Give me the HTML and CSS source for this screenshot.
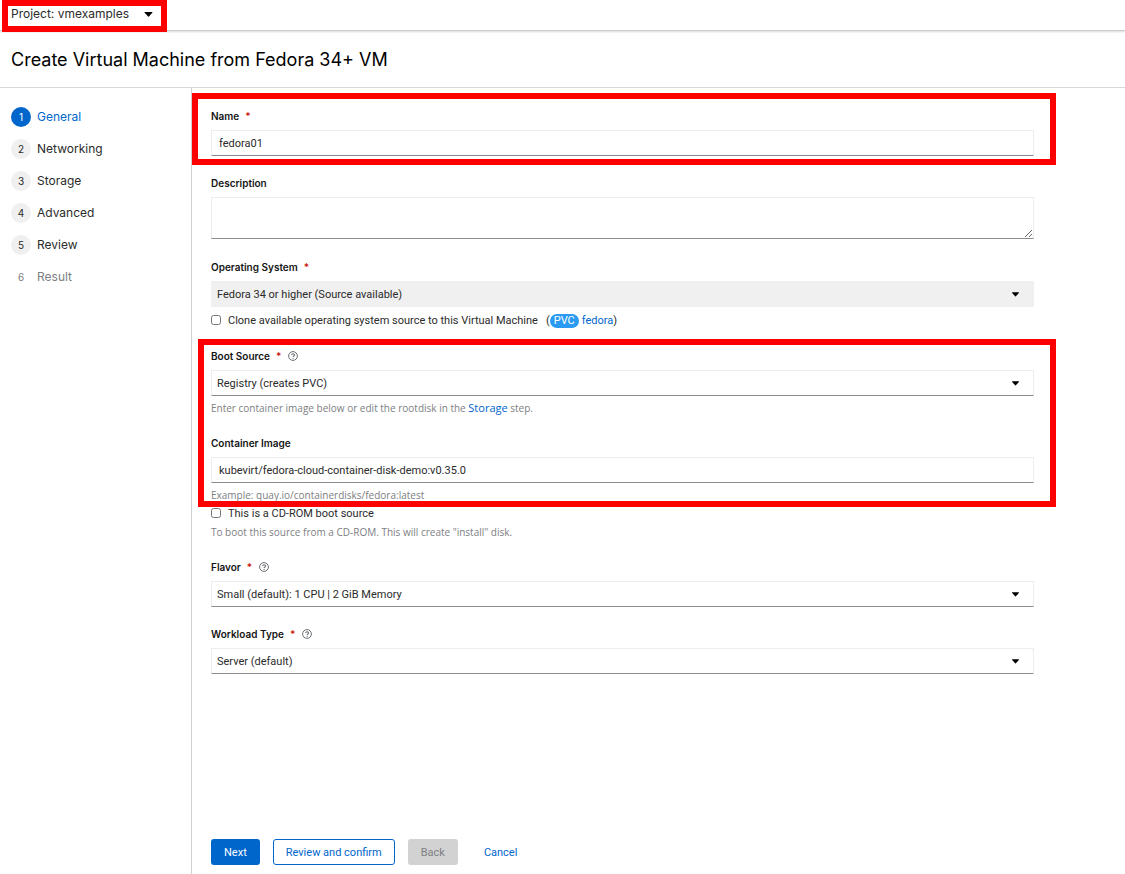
FILE: index.html
```
<!DOCTYPE html>
<html lang="en">
<head>
<meta charset="utf-8">
<title>Create Virtual Machine</title>
<link rel="stylesheet" href="styles.css">
</head>
<body>
<svg class="sprite" aria-hidden="true">
  <symbol id="caret" viewBox="0 0 8 5"><path d="M.3 0h7.4q.5.3.1.8L4.4 4.6q-.4.4-.8 0L.2.8Q-.2.3.3 0z" fill="currentColor"/></symbol>
  <symbol id="help" viewBox="0 0 10 10"><circle cx="5" cy="5" r="4.4" fill="none" stroke="currentColor"/><path d="M3.6 3.9c.1-1.6 3-1.5 2.9.1C6.500 5 5.100 4.900 5.100 6" fill="none" stroke="currentColor" stroke-width="1.100"/><circle cx="5.100" cy="7.300" r=".65" fill="currentColor"/></symbol>
</svg>

<div class="project-bar">
  <button class="project" type="button">Project: vmexamples
    <svg class="project-caret" aria-hidden="true"><use href="#caret"/></svg>
  </button>
</div>

<header class="page-header"><h1>Create Virtual Machine from Fedora 34+ VM</h1></header>

<div class="wizard">
  <nav class="steps" aria-label="Wizard steps">
    <ol>
      <li><a class="step current" href="#general" aria-current="step"><span class="num">1</span>General</a></li>
      <li><a class="step" href="#networking"><span class="num">2</span>Networking</a></li>
      <li><a class="step" href="#storage"><span class="num">3</span>Storage</a></li>
      <li><a class="step" href="#advanced"><span class="num">4</span>Advanced</a></li>
      <li><a class="step" href="#review"><span class="num">5</span>Review</a></li>
      <li><a class="step disabled" aria-disabled="true"><span class="num">6</span>Result</a></li>
    </ol>
  </nav>

  <main class="content">
    <form class="form">
      <div class="field highlight highlight-name">
        <div class="label-row"><label for="name">Name</label><span class="required">*</span></div>
        <input class="control" id="name" type="text" value="fedora01">
      </div>

      <div class="field field-multiline">
        <div class="label-row"><label for="description">Description</label></div>
        <textarea class="control" id="description"></textarea>
      </div>

      <div class="field">
        <div class="label-row"><label for="os">Operating System</label><span class="required">*</span></div>
        <div class="select"><select class="control" id="os" disabled><option>Fedora 34 or higher (Source available)</option></select><svg class="select-caret" aria-hidden="true"><use href="#caret"/></svg></div>
        <div class="check clone">
          <input type="checkbox" id="clone"><label for="clone">Clone available operating system source to this Virtual Machine</label>
          <span class="source">(<span class="pill">PVC</span><a href="#fedora">fedora</a>)</span>
        </div>
      </div>

      <div class="group highlight highlight-boot">
        <div class="field">
          <div class="label-row"><label for="boot">Boot Source</label><span class="required">*</span><button class="help" type="button" aria-label="Boot source help"><svg><use href="#help"/></svg></button></div>
          <div class="select"><select class="control" id="boot"><option>Registry (creates PVC)</option></select><svg class="select-caret" aria-hidden="true"><use href="#caret"/></svg></div>
          <p class="hint">Enter container image below or edit the rootdisk in the <a href="#storage">Storage</a> step.</p>
        </div>
        <div class="field">
          <div class="label-row"><label for="image">Container Image</label></div>
          <input class="control" id="image" type="text" value="kubevirt/fedora-cloud-container-disk-demo:v0.35.0">
          <p class="hint">Example: quay.io/containerdisks/fedora:latest</p>
        </div>
      </div>

      <div class="field cdrom">
        <div class="check"><input type="checkbox" id="cdrom"><label for="cdrom">This is a CD-ROM boot source</label></div>
        <p class="hint">To boot this source from a CD-ROM. This will create "install" disk.</p>
      </div>

      <div class="field">
        <div class="label-row"><label for="flavor">Flavor</label><span class="required">*</span><button class="help" type="button" aria-label="Flavor help"><svg><use href="#help"/></svg></button></div>
        <div class="select"><select class="control" id="flavor"><option>Small (default): 1 CPU | 2 GiB Memory</option></select><svg class="select-caret" aria-hidden="true"><use href="#caret"/></svg></div>
      </div>

      <div class="field">
        <div class="label-row"><label for="workload">Workload Type</label><span class="required">*</span><button class="help" type="button" aria-label="Workload type help"><svg><use href="#help"/></svg></button></div>
        <div class="select"><select class="control" id="workload"><option>Server (default)</option></select><svg class="select-caret" aria-hidden="true"><use href="#caret"/></svg></div>
      </div>
    </form>

    <footer class="actions">
      <button class="btn primary" type="button">Next</button>
      <button class="btn secondary" type="button">Review and confirm</button>
      <button class="btn" type="button" disabled>Back</button>
      <button class="btn link" type="button">Cancel</button>
    </footer>
  </main>
</div>
</body>
</html>
```
FILE: styles.css
```
* { box-sizing: border-box; }

body {
  margin: 0;
  min-height: 100vh;
  display: flex;
  flex-direction: column;
  background: #fff;
  color: #2b2b2b;
  font: 11px/16px Roboto, "Liberation Sans", sans-serif;
}

a { color: #06c; text-decoration: none; }
button, input, textarea, select { font: inherit; color: inherit; }
.sprite { position: absolute; width: 0; height: 0; }

.project-bar {
  height: 31px;
  padding-left: 2px;
  border-bottom: 1px solid #ccc;
  box-shadow: 0 1px 2px rgba(0, 0, 0, .15);
}
.project {
  position: relative;
  display: flex;
  align-items: center;
  gap: 15px;
  height: 32px;
  padding: 0 8px 4px 3px;
  border: 6px solid #f00;
  background: #fff;
  font-family: Inter, sans-serif;
  font-size: 12px;
}
.project-caret { width: 9px; height: 5px; color: #000; }

.page-header {
  padding: 14px 11px 13px;
  border-bottom: 1px solid #d8d8d8;
}
h1 {
  margin: 0;
  font: 400 18px/29px Inter, sans-serif;
  color: #000;
}

.wizard { flex: 1; display: flex; }
.steps {
  flex: 0 0 192px;
  padding: 19px 11px;
  border-right: 1px solid #d2d2d2;
}
.steps ol {
  display: flex;
  flex-direction: column;
  gap: 12px;
  margin: 0;
  padding: 0;
  list-style: none;
}
.step {
  display: flex;
  align-items: center;
  gap: 6px;
  color: #2b2b2b;
  font: 12px/20px Inter, sans-serif;
}
.num {
  width: 20px;
  height: 20px;
  border-radius: 50%;
  background: #f0f0f0;
  font-size: 10px;
  text-align: center;
}
.step.current { color: #06c; }
.current .num { background: #06c; color: #fff; }
.step.disabled { color: #7d8083; }
.disabled .num { background: none; }

.content {
  flex: 1;
  display: flex;
  flex-direction: column;
  padding: 20px 91px 9px 19px;
}
.form, .group { display: flex; flex-direction: column; gap: 19px; }
.field-multiline { margin-bottom: 1px; }

.label-row {
  display: flex;
  align-items: center;
  height: 16px;
  margin-bottom: 6px;
  color: #151515;
  font: 600 10px/16px Inter, sans-serif;
}
.required { margin-left: 6px; color: #c9190b; }
.help {
  width: 10px;
  height: 10px;
  margin-left: 7px;
  padding: 0;
  border: 0;
  background: none;
  color: #6a6e73;
}
.help svg { display: block; width: 10px; height: 10px; }

.control {
  display: block;
  width: 100%;
  height: 26px;
  padding: 0 7px;
  border: 1px solid #ededed;
  border-bottom-color: #8a8d90;
  border-radius: 0;
  outline: 0;
  background: #fff;
}
textarea.control { height: 42px; resize: vertical; }
.select { position: relative; }
select.control { appearance: none; padding: 1px 30px 0 5px; opacity: 1; }
select.control:disabled { border-color: #f0f0f0; background: #f0f0f0; color: #2b2b2b; }
.select-caret {
  position: absolute;
  top: 11px;
  right: 15px;
  width: 7px;
  height: 5px;
  color: #000;
  pointer-events: none;
}

.check { display: flex; align-items: center; height: 17px; }
.check input { width: 10px; height: 10px; margin: 0 7px 2px 0; }
.clone { margin-top: 5px; }
.source { display: flex; align-items: center; margin-left: 8px; }
.pill {
  height: 14px;
  margin-right: 3px;
  padding: 0 4px;
  border-radius: 7px;
  background: #2b9af3;
  color: #fff;
  line-height: 14px;
}

.hint {
  margin: 4px 0 0;
  color: #7d8083;
  font: 10px/16px "Open Sans", sans-serif;
}
.hint a { font-size: 11px; line-height: 1; }
.cdrom { margin-top: -17px; }
.cdrom .hint { margin-top: 2px; }

/* Red call-out frames lie over the form without affecting its flow. */
.highlight { position: relative; }
.highlight::after {
  content: "";
  position: absolute;
  border: 6px solid #f00;
  pointer-events: none;
}
.highlight-name::after { inset: -15px -22px -9px -19px; }
.highlight-boot::after { inset: -9px -22px -4px -13px; }

.actions {
  display: flex;
  gap: 13px;
  margin-top: auto;
  padding-top: 20px;
}
.btn {
  height: 26px;
  padding: 1px 12px 0;
  border: 1px solid transparent;
  border-radius: 3px;
  background: none;
}
.primary { background: #06c; color: #fff; }
.secondary { border-color: #06c; color: #06c; }
.btn:disabled { background: #d2d2d2; color: #7d8083; }
.link { color: #06c; }
```
